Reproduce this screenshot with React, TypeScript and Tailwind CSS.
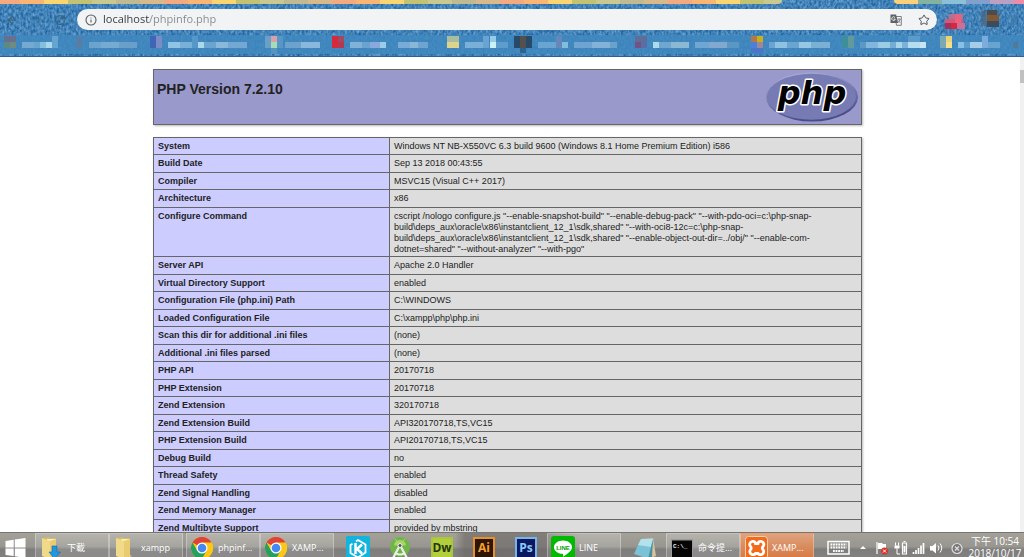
import type { ReactNode } from "react";
import { ArrowLeft, ArrowRight, Info, RotateCw, Star } from "lucide-react";

/* ---------- browser chrome ---------- */

const stripColors = [
  "bg-[#f4a97e]", "bg-[#fcb472]", "bg-[#fbd670]", "bg-[#c3c272]", "bg-[#c8c890]", "bg-[#c0b992]", "bg-[#d8b98c]",
];
const stripTail = ["bg-[#fbd078]", "bg-[#83b3a0]", "bg-[#8cc0d6]", "bg-[#82a0cc]", "bg-[#bd9fc4]", "bg-[#ee8ba6]"];

function TabStrip() {
  return (
    <div className="flex h-1 w-full overflow-hidden">
      <div className="flex w-[782px] overflow-hidden rounded-br">
        <span className="w-5 shrink-0 bg-[#f4a97e]" />
        {Array.from({ length: 32 }, (_, i) => (
          <span key={i} className={`w-6 shrink-0 ${stripColors[(i + 1) % 7]}`} />
        ))}
      </div>
      <div className="w-[112px]" />
      <div className="flex flex-1 overflow-hidden rounded-bl">
        {stripTail.map((c) => (
          <span key={c} className={`w-6 shrink-0 ${c}`} />
        ))}
      </div>
    </div>
  );
}

function Denim() {
  return (
    <svg className="absolute inset-0 h-full w-full" aria-hidden="true">
      <filter id="denim" x="0" y="0" width="100%" height="100%" colorInterpolationFilters="sRGB">
        <feTurbulence type="fractalNoise" baseFrequency="0.42 0.3" numOctaves={2} seed={4} />
        <feColorMatrix values="0.5 0 0 0 0.01  0.42 0 0 0 0.3  0.3 0 0 0 0.57  0 0 0 0 1" />
      </filter>
      <rect width="100%" height="100%" filter="url(#denim)" />
    </svg>
  );
}

/* x, y, width, height, colour, opacity */
type Cell = [number, number, number, number, string, number];

const bookmarkCells: Cell[] = [
  [4, 1, 12, 6, "#6f6a86", 0.8], [4, 7, 6, 6, "#5b8a80", 1], [10, 7, 6, 6, "#6f8a80", 1],
  [22, 7, 12, 6, "#76a9d0", 1], [34, 7, 6, 6, "#68a4d0", 1], [40, 7, 6, 6, "#86c0dc", 1], [46, 7, 6, 6, "#a9d8ea", 1], [52, 1, 6, 12, "#6fabd4", 0.8],
  [76, 1, 6, 12, "#5c7ca0", 0.8], [89, 7, 12, 6, "#6ba3cc", 1], [101, 7, 18, 6, "#77aad0", 1], [119, 7, 18, 6, "#6a9fca", 1],
  [150, 1, 6, 12, "#3f66b4", 1], [156, 1, 6, 12, "#7a8cc6", 1],
  [168, 7, 12, 6, "#90c4e2", 1], [180, 7, 12, 6, "#79b0d8", 1], [192, 1, 6, 12, "#5f9fcc", 0.7], [198, 7, 6, 6, "#a8d8ea", 1], [204, 7, 12, 6, "#6aa4cf", 1], [216, 7, 12, 6, "#8ab8d8", 1], [228, 7, 19, 6, "#74a8d2", 1],
  [265, 1, 6, 12, "#6aa0c8", 1], [271, 1, 6, 6, "#d8a0a8", 1], [271, 7, 6, 6, "#a5dcb8", 1], [271, 13, 6, 6, "#5595c0", 1], [277, 1, 6, 12, "#6aa0cc", 0.6],
  [285, 7, 16, 6, "#6ca2cc", 1], [301, 7, 19, 6, "#8ab8dc", 1],
  [332, 1, 6, 12, "#d42a3c", 1], [338, 1, 6, 6, "#a24862", 1], [338, 7, 6, 6, "#b43850", 1],
  [350, 7, 12, 6, "#82b2d8", 1], [362, 7, 8, 6, "#6aa2d0", 1], [370, 7, 10, 6, "#8aa8dc", 1], [380, 7, 6, 6, "#98cce8", 1], [398, 7, 12, 6, "#78acd6", 1], [410, 7, 8, 6, "#8ab6d8", 1], [418, 7, 10, 6, "#6da4d0", 1],
  [447, 1, 12, 6, "#a8bca0", 1], [447, 7, 12, 6, "#dcd48a", 1],
  [465, 7, 18, 6, "#7ab0d8", 1], [483, 1, 6, 12, "#6aa2d2", 1], [490, 1, 6, 6, "#94ccea", 1], [490, 7, 6, 6, "#cdf0f4", 1], [496, 7, 12, 6, "#5e9ccc", 1],
  [514, 1, 18, 12, "#264a68", 1], [520, 1, 6, 12, "#54504e", 1], [520, 13, 6, 5, "#2c6490", 1],
  [538, 7, 18, 6, "#6aa4d0", 1], [556, 1, 6, 12, "#6f88b8", 0.8], [562, 7, 6, 6, "#82bcdc", 1], [574, 7, 18, 6, "#6fa4d0", 1], [592, 7, 18, 6, "#84b2d6", 1], [610, 7, 7, 6, "#6ba2cc", 1],
  [635, 1, 12, 6, "#5f6e98", 1], [635, 7, 6, 6, "#745286", 1], [641, 7, 6, 6, "#586ea4", 1],
  [653, 7, 6, 6, "#acdcec", 1], [659, 7, 12, 6, "#6fa7cf", 1], [671, 7, 18, 6, "#8cb8d4", 1], [695, 7, 14, 6, "#70a6d2", 1], [709, 7, 18, 6, "#83a8d0", 1], [727, 7, 12, 6, "#5a98c4", 1],
  [751, 1, 6, 6, "#b37848", 1], [757, 1, 6, 6, "#c6b020", 1], [751, 7, 6, 6, "#4a80dc", 1], [757, 7, 6, 6, "#9c8898", 1], [751, 13, 12, 5, "#4c72cc", 0.8],
  [769, 7, 6, 6, "#6ba4d2", 1], [775, 7, 12, 6, "#8fc2e0", 1], [787, 7, 12, 6, "#6aa4d0", 1], [799, 7, 12, 6, "#96c8e4", 1], [811, 7, 19, 6, "#7ab0d4", 1],
  [842, 1, 6, 12, "#3e8f9c", 1], [848, 1, 6, 12, "#629a9c", 1],
  [860, 7, 6, 6, "#5e98c4", 1], [866, 7, 12, 6, "#83b6dc", 1], [878, 7, 12, 6, "#9ccce4", 1], [890, 7, 6, 6, "#74acd4", 1], [896, 7, 6, 6, "#a6d4e8", 1], [902, 7, 6, 6, "#7cb2d8", 1], [908, 7, 12, 6, "#b4def0", 1], [920, 7, 6, 6, "#c6e4f8", 1], [908, 1, 12, 6, "#5c9aca", 1],
  [940, 1, 6, 12, "#8ab0b0", 0.8], [946, 1, 6, 6, "#e8d27a", 1], [946, 7, 6, 6, "#f4e08a", 1],
  [958, 7, 6, 6, "#8ac0e4", 1], [964, 7, 6, 6, "#5a9ccc", 1], [970, 7, 12, 6, "#a6cce8", 1], [982, 1, 6, 12, "#7cacdc", 1], [988, 7, 12, 6, "#68a4d0", 1],
  [1013, 7, 5, 6, "#54789a", 1],
];

const extensionCells: Cell[] = [
  [8, 4, 14, 6, "#b87092", 1], [14, 4, 6, 5, "#e46480", 1], [4, 9, 18, 6, "#d45878", 1], [14, 9, 6, 6, "#f0607c", 1],
  [4, 13, 6, 6, "#a4305c", 1], [10, 13, 6, 6, "#d82840", 1], [16, 13, 8, 6, "#c87098", 1],
  [40, 1, 18, 15, "#4a6680", 0.7], [46, 0, 10, 5, "#4c4c4c", 1], [46, 5, 12, 6, "#7e5a38", 1], [46, 11, 12, 6, "#3c4c5c", 1],
  [70, 5, 6, 10, "#3f7aaa", 0.7],
];

function Mosaic({ cells, width, height }: { cells: Cell[]; width: number; height: number }) {
  return (
    <svg width={width} height={height} className="shrink-0" aria-hidden="true">
      {cells.map(([x, y, w, h, fill, o], i) => (
        <rect key={i} x={x} y={y} width={w} height={h} fill={fill} opacity={o} />
      ))}
    </svg>
  );
}

function TranslateIcon() {
  return (
    <svg width="12" height="12" viewBox="0 0 12 12" aria-hidden="true">
      <path d="M5 2.5h6.3v8.800H6.500z" fill="#f1f3f4" stroke="#5f6368" strokeWidth="0.8" />
      <path d="M.5.5h5.600l2 8.500H.5z" fill="#5f6368" />
      <path d="M5 3.600A1.800 1.800 0 1 0 5.300 5H3.700" fill="none" stroke="#fff" strokeWidth="0.8" />
      <path d="M7.500 5.200h3.200M9 4.400v.8M10.200 5.200Q9.700 7.500 8 8.400M8.200 6.500Q9 8 10.400 8.600" fill="none" stroke="#5f6368" strokeWidth="0.7" />
    </svg>
  );
}

function BrowserChrome() {
  return (
    <header className="relative shrink-0 overflow-hidden border-b border-[#2a6294] bg-[#2f76b0]">
      <Denim />
      <div className="relative">
        <TabStrip />
        <div className="flex h-[31px] items-center">
          <div className="flex w-[77px] shrink-0 items-center gap-3 pl-[6px] text-[#3b647f]">
            <button aria-label="Back"><ArrowLeft size={12} strokeWidth={2.5} /></button>
            <button aria-label="Forward" className="opacity-40"><ArrowRight size={12} strokeWidth={2.5} /></button>
            <button aria-label="Reload"><RotateCw size={12} strokeWidth={2.5} /></button>
          </div>
          <div className="flex h-[21px] flex-1 items-center rounded-full bg-[#f1f3f4] pl-2 pr-[7px]">
            <Info size={12} strokeWidth={2.2} className="mr-[6px] shrink-0 text-[#5a5e62]" />
            <input
              aria-label="Address"
              defaultValue="localhost/phpinfo.php"
              className="h-5 min-w-0 flex-1 bg-[linear-gradient(90deg,#33373b_46px,#85898d_46px)] bg-clip-text pb-[2px] font-['Open_Sans','Noto_Sans',sans-serif] text-[11px] text-transparent outline-none"
            />
            <button aria-label="Translate this page" className="mr-4"><TranslateIcon /></button>
            <button aria-label="Bookmark this page" className="text-[#4c5054]"><Star size={12} strokeWidth={2} /></button>
          </div>
          <div className="flex w-[87px] shrink-0 items-center pl-1">
            <Mosaic cells={extensionCells} width={83} height={20} />
          </div>
        </div>
        <nav aria-label="Bookmarks" className="mb-[2px] flex h-[19px] overflow-hidden bg-[#4088be]/85">
          <Mosaic cells={bookmarkCells} width={1024} height={19} />
        </nav>
      </div>
    </header>
  );
}

/* ---------- phpinfo page ---------- */

const rows: [string, string][] = [
  ["System", "Windows NT NB-X550VC 6.3 build 9600 (Windows 8.1 Home Premium Edition) i586"],
  ["Build Date", "Sep 13 2018 00:43:55"],
  ["Compiler", "MSVC15 (Visual C++ 2017)"],
  ["Architecture", "x86"],
  [
    "Configure Command",
    'cscript /nologo configure.js "--enable-snapshot-build" "--enable-debug-pack" "--with-pdo-oci=c:\\php-snap-build\\deps_aux\\oracle\\x86\\instantclient_12_1\\sdk,shared" "--with-oci8-12c=c:\\php-snap-build\\deps_aux\\oracle\\x86\\instantclient_12_1\\sdk,shared" "--enable-object-out-dir=../obj/" "--enable-com-dotnet=shared" "--without-analyzer" "--with-pgo"',
  ],
  ["Server API", "Apache 2.0 Handler"],
  ["Virtual Directory Support", "enabled"],
  ["Configuration File (php.ini) Path", "C:\\WINDOWS"],
  ["Loaded Configuration File", "C:\\xampp\\php\\php.ini"],
  ["Scan this dir for additional .ini files", "(none)"],
  ["Additional .ini files parsed", "(none)"],
  ["PHP API", "20170718"],
  ["PHP Extension", "20170718"],
  ["Zend Extension", "320170718"],
  ["Zend Extension Build", "API320170718,TS,VC15"],
  ["PHP Extension Build", "API20170718,TS,VC15"],
  ["Debug Build", "no"],
  ["Thread Safety", "enabled"],
  ["Zend Signal Handling", "disabled"],
  ["Zend Memory Manager", "enabled"],
  ["Zend Multibyte Support", "provided by mbstring"],
];

function PhpLogo() {
  return (
    <svg width="94" height="50" viewBox="0 0 94 50" className="overflow-visible" role="img" aria-label="PHP logo">
      <defs>
        <linearGradient id="rim" x1="0" y1="0" x2="0.3" y2="1">
          <stop offset="0" stopColor="#b4b6dc" />
          <stop offset="0.5" stopColor="#7e81b8" />
          <stop offset="1" stopColor="#484c89" />
        </linearGradient>
      </defs>
      <ellipse cx="47" cy="25" rx="46" ry="24.500" fill="url(#rim)" />
      <ellipse cx="46.500" cy="24.800" rx="44.500" ry="23" fill="#777bb3" />
      <text
        x="47" y="32" textAnchor="middle" fontSize="32" fontWeight="bold" fontStyle="italic"
        fill="#000" stroke="#fff" strokeWidth="3" strokeLinejoin="round" paintOrder="stroke"
        className="font-['DejaVu_Sans',sans-serif]"
      >
        php
      </text>
    </svg>
  );
}

function PhpInfo() {
  return (
    <main className="flex min-h-0 flex-1 overflow-hidden bg-white font-['Liberation_Sans',Arial,sans-serif] text-[#222]">
      <div className="flex-1 pr-[5px] pt-3">
        <div className="mx-auto w-[709px] max-w-full">
          <div className="flex h-[56px] items-start justify-between border border-[#666] bg-[#9999cc] pl-[3px] pr-[2px] pt-[2px] shadow-[1px_1px_2px_#bbb]">
            <h1 className="pt-[9px] text-[14px] font-bold leading-4">PHP Version 7.2.10</h1>
            <a href="#php"><PhpLogo /></a>
          </div>
          <table className="mt-3 w-full table-fixed border-collapse text-left text-[9px] leading-[11px] shadow-[1px_1px_2px_#bbb]">
            <colgroup>
              <col className="w-1/3" />
              <col />
            </colgroup>
            <tbody>
              {rows.map(([name, value]) => (
                <tr key={name} className="h-[17px] even:h-[18px]">
                  <th scope="row" className="border border-[#666] bg-[#ccccff] px-1 pb-px pt-[3px] align-top font-bold">{name}</th>
                  <td className="border border-[#666] bg-[#dddddd] px-1 pb-px pt-[3px] align-top">{value}</td>
                </tr>
              ))}
            </tbody>
          </table>
        </div>
      </div>
      <div className="w-1 bg-[#f1f1f1] pt-[13px]">
        <div className="h-[13px] bg-[#c1c1c1]" />
      </div>
    </main>
  );
}

/* ---------- taskbar ---------- */

function StartIcon() {
  return (
    <svg width="21" height="20" viewBox="0 0 21 20" fill="#fff" aria-hidden="true">
      <path d="M.5 3 8.700 1.800V9.400H.5zM9.800 1.600 20.500 0V9.400H9.800zM.5 10.500H8.700V18L.5 16.900zM9.800 10.500H20.500V20L9.800 18.300z" />
    </svg>
  );
}

function FolderIcon({ download = false }: { download?: boolean }) {
  return (
    <svg width="20" height="24" viewBox="0 0 20 24" aria-hidden="true">
      <path d="M1 2 8 1l1 1h6v19l-6 1-8-2z" fill="#d9bc62" />
      <path d="M6 3h9v17l-9 1z" fill="#f8efc0" />
      <path d="M1 2 9 5v18l-8-3z" fill="#f0d988" />
      <path d="M9 5 15 3v16l2 1-8 3z" fill="#e9cc72" />
      {download && <path d="M11 10h5v6h3.500L13.500 23 8 16h3z" fill="#1e96e0" stroke="#0f6cb4" strokeWidth="0.6" />}
    </svg>
  );
}

function ChromeIcon() {
  return (
    <svg width="24" height="24" viewBox="0 0 24 24" aria-hidden="true">
      <circle cx="12" cy="12" r="11" fill="#fbc816" />
      <path d="M12 12 2.470 6.500A11 11 0 0 1 21.530 6.500z" fill="#df4236" />
      <path d="M2.470 6.500A11 11 0 0 0 12 23L16.700 14.700 12 12 7.300 14.700z" fill="#26a05c" />
      <path d="M12 6.500H21.530A11 11 0 0 1 12 23L16.800 14.700z" fill="#fbc816" />
      <circle cx="12" cy="12" r="5.500" fill="#fff" />
      <circle cx="12" cy="12" r="4.300" fill="#4688f1" />
    </svg>
  );
}

function KIcon() {
  return (
    <svg width="24" height="24" viewBox="0 0 24 24" aria-hidden="true">
      <rect width="24" height="24" rx="2" fill="#12b3dc" />
      <path d="M10 5.500 12 4l7.500 4.500v8L12 21.500 4.500 17V9l2-1.200" fill="none" stroke="#fff" strokeWidth="1.800" />
      <path d="M9.500 7v11M16 8.500l-5 4.500 5 4.500" fill="none" stroke="#fff" strokeWidth="2.500" />
    </svg>
  );
}

function StudioIcon() {
  return (
    <svg width="22" height="24" viewBox="0 0 22 24" aria-hidden="true">
      <circle cx="11" cy="11" r="10" fill="#6fb548" />
      <path d="M5 9.500a6 5.500 0 0 1 12 0z" fill="#a8d468" />
      <path d="M6 2.500l2 3M16 2.500l-2 3" stroke="#a8d468" strokeWidth="1" />
      <path d="M10 11 3.500 23M12 11l6.500 12M7 17.500q4 2 8 0" fill="none" stroke="#eee" strokeWidth="2.200" />
      <circle cx="11" cy="9.500" r="2" fill="#555" stroke="#eee" />
    </svg>
  );
}

function LineIcon() {
  return (
    <svg width="24" height="24" viewBox="0 0 24 24" aria-hidden="true">
      <rect width="24" height="24" rx="3" fill="#00b900" />
      <path d="M12 4.500c5 0 9 2.900 9 6.700 0 3-3.500 6-9 9.600.4-2 .3-2.800-.6-3C6.500 17.500 3 14.800 3 11.200 3 7.400 7 4.500 12 4.500z" fill="#fff" />
      <text x="12" y="13.500" textAnchor="middle" fontSize="6" fontWeight="bold" fill="#00a000" className="font-['Liberation_Sans',sans-serif]">LINE</text>
    </svg>
  );
}

function NotepadIcon() {
  return (
    <svg width="24" height="24" viewBox="0 0 24 24" aria-hidden="true">
      <path d="M8 3 20 2l3 18-6 2z" fill="#d8c49a" />
      <path d="M8 3h13l-5 20L1 18z" fill="#7cc2d6" />
      <path d="M8 3h12l-2 8L5 9z" fill="#b4e2ec" />
      <path d="M20 3 15 23l4-2z" fill="#4a8ea4" />
    </svg>
  );
}

function ConsoleIcon() {
  return (
    <svg width="22" height="19" viewBox="0 0 22 19" aria-hidden="true">
      <rect width="22" height="19" fill="#9a9a9a" />
      <rect x="1" y="1.500" width="20" height="16.500" fill="#050505" />
      <text x="2" y="8.500" fontSize="6" fontWeight="bold" fill="#eee" className="font-['Liberation_Mono',monospace]">C:\_</text>
    </svg>
  );
}

function XamppIcon() {
  return (
    <svg width="23" height="24" viewBox="0 0 23 24" aria-hidden="true">
      <rect x="0.500" y="0.500" width="22" height="23" rx="3" fill="#f26b1d" stroke="#fbd0ac" />
      <path
        d="M7 5.500a3 3 0 0 0-1.500 5q1 1 .5 2.500a3.200 3.200 0 1 0 4.500 4.500h2.500a3.200 3.200 0 1 0 4.500-4.500q-.5-1.500.5-2.500a3 3 0 0 0-1.500-5Q13.500 5 13 7.500h-2.500Q10 5 7 5.500z"
        fill="none" stroke="#fff" strokeWidth="2.800"
      />
    </svg>
  );
}

function Adobe({ label, tone }: { label: string; tone: string }) {
  return <span className={`flex size-[22px] items-center justify-center border-2 font-['Open_Sans',sans-serif] text-[12px] font-bold ${tone}`}>{label}</span>;
}

function TaskButton({ icon, label, tone }: { icon: ReactNode; label: string; tone?: string }) {
  return (
    <button
      className={`flex h-full w-[74px] shrink-0 items-center gap-1 whitespace-nowrap border border-white/30 px-[3px] ${tone ?? "bg-linear-to-b from-white/20 to-white/5"}`}
    >
      <span className="flex w-6 shrink-0 justify-center">{icon}</span>
      <span>{label}</span>
    </button>
  );
}

function Pinned({ label, children }: { label: string; children: ReactNode }) {
  return <button aria-label={label} className="flex h-full w-[42px] shrink-0 items-center justify-center">{children}</button>;
}

function Tray() {
  return (
    <div className="ml-auto flex shrink-0 items-center text-white">
      <svg width="137" height="16" viewBox="0 0 137 16" fill="none" stroke="#fff" aria-label="Notification area" role="img">
        <rect x="1" y="1.500" width="21" height="12.500" strokeWidth="1.500" />
        <path d="M3.500 4.500h16M3.500 7.500h16M6 11h11" strokeWidth="1.800" strokeDasharray="1.800 0.800" />
        <path d="m33 9 3-3 3 3z" fill="#fff" stroke="none" />
        <path d="M50 2v12" strokeWidth="1.200" />
        <path d="M51 3h4l1 1h3v6h-3l-1-1h-4z" fill="#fff" stroke="none" />
        <circle cx="57.500" cy="11" r="3.500" fill="#d8342c" stroke="none" />
        <path d="m56 9.500 3 3m0-3-3 3" />
        <path d="M75.500 3h4v11h-4zM76.500 1.500h2" strokeWidth="1.200" />
        <path d="M76.500 6h2v6.500h-2z" fill="#fff" stroke="none" />
        <path d="M68.500 2.500v3m3-3v3M70 8.500V14h3" strokeWidth="1" />
        <path d="M67.500 5.500h5v3h-5z" fill="#fff" stroke="none" />
        <path d="M86.500 14v-2m2.500 2v-4m2.500 4V8m2.500 6V5.500m2.500 8.500V3" strokeWidth="1.700" />
        <path d="M103 6h2.500L109 3v10.500L105.500 10.500H103z" fill="#fff" stroke="none" />
        <path d="M111 5.500q2 2.500 0 5M113 3.500q3.500 4.500 0 9" strokeWidth="1" />
        <circle cx="130" cy="8.500" r="5" fill="#777" stroke="#ddd" strokeWidth="1.200" />
        <path d="m128 6.500 4 4m0-4-4 4" stroke="#ddd" strokeWidth="1.300" />
      </svg>
      <time className="w-[60px] pb-[2px] pl-[2px] text-center text-[10px] leading-3">
        下午 10:54
        <br />
        2018/10/17
      </time>
    </div>
  );
}

function Taskbar() {
  return (
    <footer className="h-[25px] shrink-0 overflow-hidden border-t border-[#77756f] bg-[#8c8a86]">
      <div className="flex h-[30px] items-center gap-[3px] bg-[linear-gradient(90deg,transparent_455px,#6a656499_465px,#6a656499_545px,transparent_580px),linear-gradient(180deg,#a3a198_0%,#98968f_45%,#7e7d7e_55%,#86837e_100%)] font-['Open_Sans','Noto_Sans','Noto_Sans_CJK_TC',sans-serif] text-[9px] text-white">
        <div className="flex h-full items-center">
          <button aria-label="Start" className="flex w-[35px] shrink-0 justify-center pr-[5px]"><StartIcon /></button>
          <TaskButton icon={<FolderIcon download />} label="下載" />
          <TaskButton icon={<FolderIcon />} label="xampp" />
        </div>
        <div className="flex h-full">
          <TaskButton icon={<ChromeIcon />} label="phpinf..." />
          <TaskButton icon={<ChromeIcon />} label="XAMP..." />
        </div>
        <div className="flex h-full">
          <Pinned label="K"><KIcon /></Pinned>
          <Pinned label="Android Studio"><StudioIcon /></Pinned>
          <Pinned label="Dreamweaver"><Adobe label="Dw" tone="border-[#a9c63e] bg-[#b4cf3c] text-[#26360c]" /></Pinned>
          <Pinned label="Illustrator"><Adobe label="Ai" tone="border-[#e8902c] bg-[#2e1606] text-[#f7a030]" /></Pinned>
          <Pinned label="Photoshop"><Adobe label="Ps" tone="border-[#78b4ec] bg-[#0c1860] text-[#8cc8fc]" /></Pinned>
          <TaskButton icon={<LineIcon />} label="LINE" />
        </div>
        <div className="flex h-full">
          <Pinned label="Notepad"><NotepadIcon /></Pinned>
          <TaskButton icon={<ConsoleIcon />} label="命令提..." />
          <TaskButton icon={<XamppIcon />} label="XAMP..." tone="bg-linear-to-b from-[#dfa27e] via-[#d8895a] to-[#d9733a]" />
        </div>
        <Tray />
      </div>
    </footer>
  );
}

export default function App() {
  return (
    <div className="flex h-screen flex-col overflow-hidden">
      <BrowserChrome />
      <PhpInfo />
      <Taskbar />
    </div>
  );
}
